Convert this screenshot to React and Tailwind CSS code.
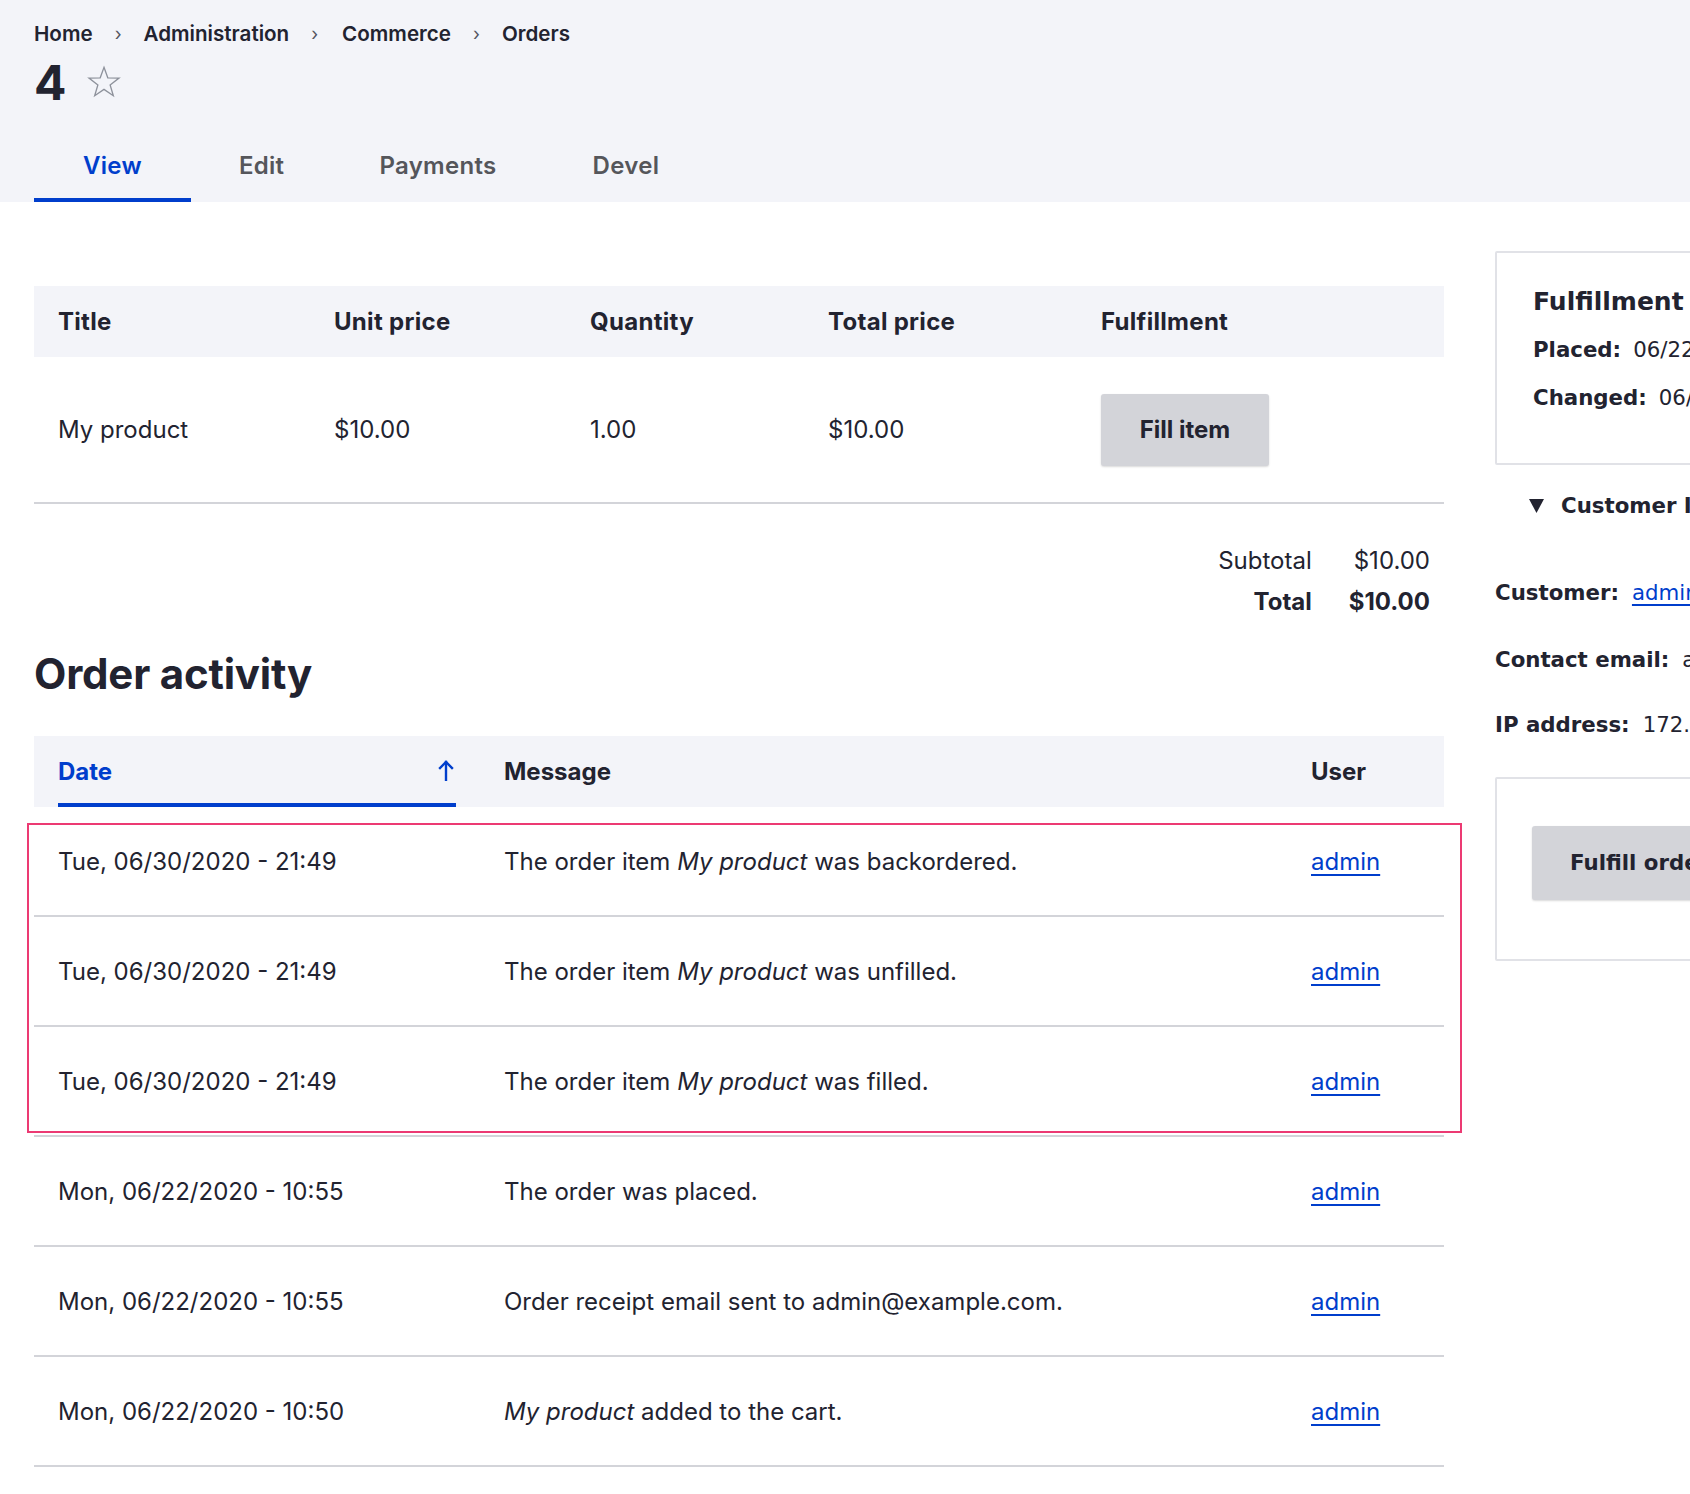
import React from "react";

const rows = [
  { date: "Tue, 06/30/2020 - 21:49", msg: <>The order item <em>My product</em> was backordered.</> },
  { date: "Tue, 06/30/2020 - 21:49", msg: <>The order item <em>My product</em> was unfilled.</> },
  { date: "Tue, 06/30/2020 - 21:49", msg: <>The order item <em>My product</em> was filled.</> },
  { date: "Mon, 06/22/2020 - 10:55", msg: <>The order was placed.</> },
  { date: "Mon, 06/22/2020 - 10:55", msg: <>Order receipt email sent to admin@example.com.</> },
  { date: "Mon, 06/22/2020 - 10:50", msg: <><em>My product</em> added to the cart.</> },
];

function Sep() {
  return <span className="mx-[22px] text-[18px] font-normal text-[#545560]">›</span>;
}

function Star() {
  return (
    <svg width="36" height="35" viewBox="0 0 24 24" fill="none" stroke="#8e929c" strokeWidth="0.9" strokeLinejoin="miter">
      <path d="M12 1.6l2.6 7.2 7.7.2-6.1 4.7 2.2 7.4L12 16.7l-6.4 4.4 2.2-7.4L1.7 9l7.7-.2z" />
    </svg>
  );
}

function ArrowUp() {
  return (
    <svg width="16" height="22" viewBox="0 0 16 22" fill="none" stroke="#003ecc" strokeWidth="2.4" strokeLinecap="square">
      <path d="M8 3v18" />
      <path d="M2 9l6-6 6 6" />
    </svg>
  );
}

export default function App() {
  return (
    <div className="w-[1690px] min-h-[1494px] overflow-hidden bg-white text-[#222330] font-['Inter',sans-serif]">
      {/* Header */}
      <div className="bg-[#f3f4f9] px-[34px] pt-[20px]">
        <nav className="flex items-center text-[20.6px] font-semibold leading-[28px]">
          <span>Home</span>
          <Sep />
          <span>Administration</span>
          <Sep />
          <span className="ml-[2px]">Commerce</span>
          <Sep />
          <span>Orders</span>
        </nav>
        <div className="mt-[11px] flex h-[48px] items-center">
          <h1 className="text-[48px] font-bold leading-[48px]">4</h1>
          <span className="ml-[20px] mt-[-2px]">
            <Star />
          </span>
        </div>
        <div className="mt-[21px] flex text-[24px] font-semibold tracking-[0.3px]">
          <div className="flex h-[74px] items-center border-b-4 border-[#003ecc] px-[49px] pt-[5px] text-[#003ecc]">View</div>
          <div className="flex h-[74px] items-center border-b-4 border-transparent px-[48px] pt-[5px] text-[#55565b]">Edit</div>
          <div className="flex h-[74px] items-center border-b-4 border-transparent px-[47px] pt-[5px] text-[#55565b]">Payments</div>
          <div className="flex h-[74px] items-center border-b-4 border-transparent px-[49px] pt-[5px] text-[#55565b]">Devel</div>
        </div>
      </div>

      {/* Main */}
      <div className="flex gap-[51px] pl-[34px] pt-[49px]">
        <div className="w-[1410px] shrink-0 pt-[35px] text-[24px]">
          {/* Order items table */}
          <div className="grid h-[71px] grid-cols-[276px_256px_238px_273px_1fr] bg-[#f3f4f9] font-bold tracking-[0.3px]">
            <div className="flex items-center px-[24px]">Title</div>
            <div className="flex items-center px-[24px]">Unit price</div>
            <div className="flex items-center px-[24px]">Quantity</div>
            <div className="flex items-center px-[24px]">Total price</div>
            <div className="flex items-center px-[24px]">Fulfillment</div>
          </div>
          <div className="grid h-[147px] grid-cols-[276px_256px_238px_273px_1fr] border-b-2 border-[#d3d4d9]">
            <div className="flex items-center px-[24px]">My product</div>
            <div className="flex items-center px-[24px]">$10.00</div>
            <div className="flex items-center px-[24px]">1.00</div>
            <div className="flex items-center px-[24px]">$10.00</div>
            <div className="flex items-center px-[24px]">
              <button className="flex h-[72px] w-[168px] items-center justify-center rounded-[3px] bg-[#d3d4d9] text-[24px] font-bold text-[#222330] shadow-[0_1px_2px_rgba(0,0,0,0.15)]">
                Fill item
              </button>
            </div>
          </div>

          {/* Totals */}
          <div className="mt-[36px] flex justify-end pr-[14px]">
            <div className="grid grid-cols-[auto_auto] gap-x-[37px] text-right leading-[41px]">
              <div>Subtotal</div>
              <div>$10.00</div>
              <div className="font-bold">Total</div>
              <div className="font-bold">$10.00</div>
            </div>
          </div>

          <h2 className="mt-[27px] text-[42px] font-bold leading-[50px] tracking-[-0.2px]">Order activity</h2>

          {/* Activity table */}
          <div className="mt-[37px] grid h-[71px] grid-cols-[446px_807px_157px] bg-[#f3f4f9] font-bold">
            <div className="px-[24px]">
              <div className="flex h-full items-center justify-between border-b-4 border-[#003ecc] pt-[4px] text-[#003ecc]">
                <span>Date</span>
                <span className="mr-[2px] mt-[-4px]">
                  <ArrowUp />
                </span>
              </div>
            </div>
            <div className="flex items-center px-[24px]">Message</div>
            <div className="flex items-center px-[24px]">User</div>
          </div>
          <div className="relative">
            {rows.map((r, i) => (
              <div key={i} className="grid h-[110px] grid-cols-[446px_807px_157px] border-b-2 border-[#d3d4d9]">
                <div className="flex items-center px-[24px] pt-[2px]">{r.date}</div>
                <div className="flex items-center px-[24px] pt-[2px]">
                  <span>{r.msg}</span>
                </div>
                <div className="flex items-center px-[24px] pt-[2px]">
                  <a href="#" className="text-[#003ecc] underline decoration-[1.5px] underline-offset-[4px]">admin</a>
                </div>
              </div>
            ))}
            <div className="pointer-events-none absolute left-[-7px] top-[16px] h-[310px] w-[1435px] border-2 border-[#ec3a73]"></div>
          </div>
        </div>

        {/* Sidebar */}
        <aside className="w-[420px] shrink-0 font-['DejaVu_Sans',sans-serif] text-[21.3px] text-[#222330]">
          <div className="rounded-[2px] border-2 border-[#e1e2e7] pb-[49px] pl-[36px] pt-[34px]">
            <div className="whitespace-nowrap text-[25px] font-bold leading-[30px]">Fulfillment</div>
            <div className="mt-[17px] whitespace-nowrap leading-[32px]">
              <span className="font-bold">Placed:</span>
              <span className="ml-[12px]">06/22/2020 - 10:55</span>
            </div>
            <div className="mt-[16px] whitespace-nowrap leading-[32px]">
              <span className="font-bold">Changed:</span>
              <span className="ml-[12px]">06/30/2020 - 21:49</span>
            </div>
          </div>
          <div className="mt-[25px] flex items-center whitespace-nowrap pl-[34px] leading-[32px]">
            <svg width="15" height="14" viewBox="0 0 15 14">
              <path d="M0 0h15L7.5 14z" fill="#222330" />
            </svg>
            <span className="ml-[17px] font-bold">Customer Information</span>
          </div>
          <div className="mt-[55px] whitespace-nowrap leading-[32px]">
            <span className="font-bold">Customer:</span>
            <a href="#" className="ml-[13px] text-[#003ecc] underline decoration-[1.5px] underline-offset-[4px]">admin</a>
          </div>
          <div className="mt-[35px] whitespace-nowrap leading-[32px]">
            <span className="font-bold">Contact email:</span>
            <span className="ml-[13px]">admin@example.com</span>
          </div>
          <div className="mt-[33px] whitespace-nowrap leading-[32px]">
            <span className="font-bold">IP address:</span>
            <span className="ml-[13px]">172.19.0.1</span>
          </div>
          <div className="mt-[36px] rounded-[2px] border-2 border-[#e1e2e7] pb-[59px] pl-[35px] pt-[47px]">
            <button className="flex h-[74px] items-center whitespace-nowrap rounded-[3px] bg-[#d3d4d9] px-[38px] font-bold text-[#222330] shadow-[0_1px_2px_rgba(0,0,0,0.15)]">
              Fulfill order
            </button>
          </div>
        </aside>
      </div>
    </div>
  );
}
